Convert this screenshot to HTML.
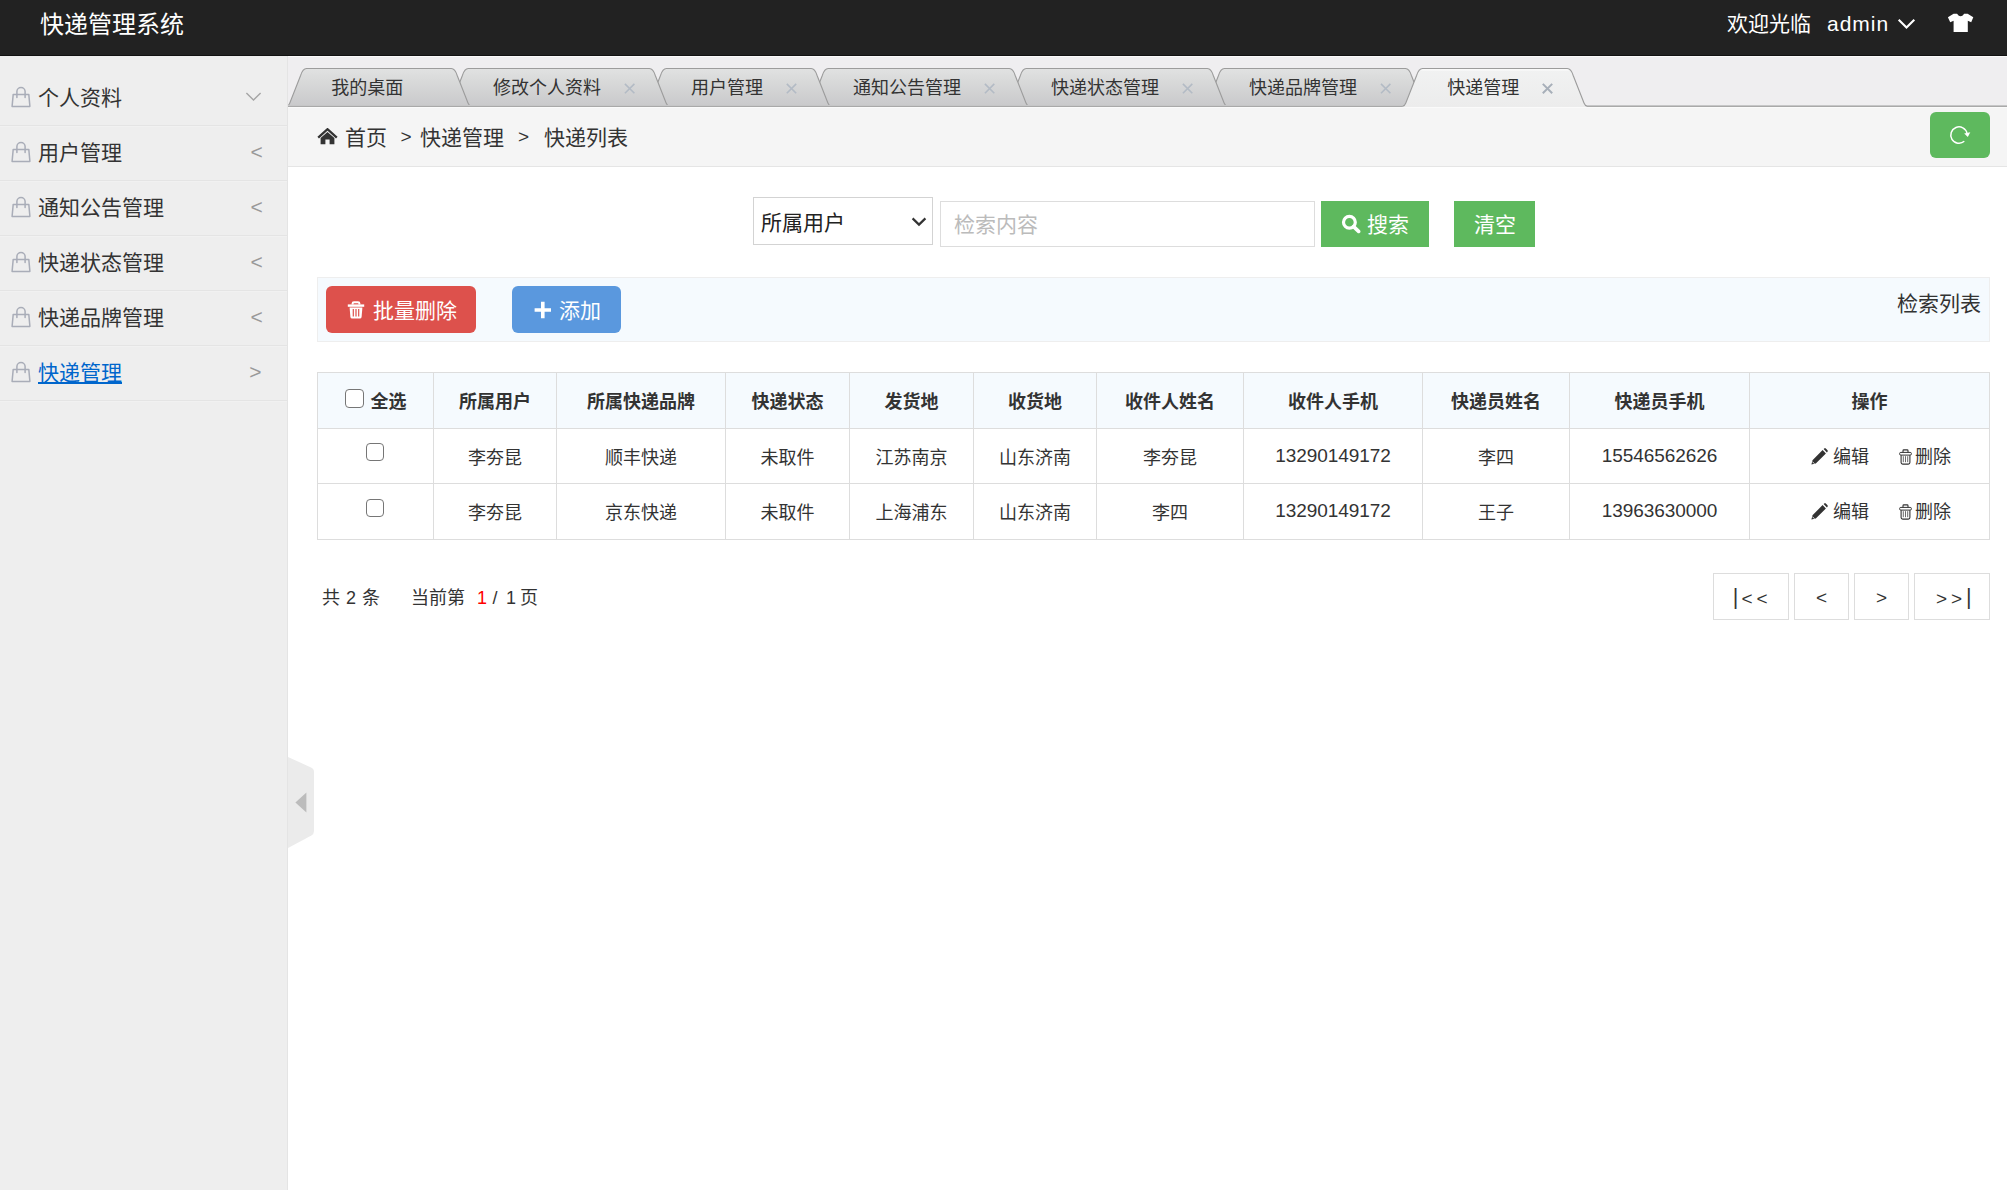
<!DOCTYPE html>
<html lang="zh-CN">
<head>
<meta charset="utf-8">
<title>快递管理系统</title>
<style>
*{box-sizing:border-box;margin:0;padding:0}
html,body{width:2007px;height:1190px;overflow:hidden;background:#fff}
body{font-family:"Liberation Sans","Noto Sans CJK SC",sans-serif;color:#333;font-size:21px;position:relative}
a{color:inherit;text-decoration:none}
ul{list-style:none}
svg{display:block}

/* ---------- header ---------- */
#hd{position:absolute;left:0;top:0;width:2007px;height:56px;background:#222;color:#fff;border-bottom:1px solid #121212}
#hd .logo{position:absolute;left:40px;top:1.5px;height:56px;line-height:46px;font-size:24px;color:#fff}
#hd .welcome{position:absolute;left:1727px;top:1px;line-height:46px;font-size:21px}
#hd .user{position:absolute;left:1827px;top:1px;line-height:46px;font-size:21px;letter-spacing:1px}
#hd svg{position:absolute}

/* ---------- sidebar ---------- */
#side{position:absolute;left:0;top:56px;width:288px;height:1134px;background:#eee;border-right:1px solid #e4e4e4}
#side ul{position:absolute;left:0;top:15px;width:287px}
#side li{position:relative;height:55px;border-bottom:1px solid #e4e4e4;box-shadow:0 1px 0 #f1f1f1;line-height:54px;font-size:21px;color:#333;padding-left:38px}
#side li svg.ic{position:absolute;left:10px;top:15.3px}
#side li svg.chev{position:absolute;left:245px;top:21px}
#side li .arr{position:absolute;left:250.5px;top:-1px;font-size:21px;color:#999}
#side li.cur a{color:#0066cc;text-decoration:underline}
#side li.cur .arr{left:249.3px}

/* ---------- tabs ---------- */
#tabbar{position:absolute;left:288px;top:56px;width:1719px;height:51px;background:#efeef0;box-shadow:inset 0 1px 0 #fbfbfb}
#tabbar svg{position:absolute;left:0;top:0}
#tabbar span{position:absolute;top:13px;height:38px;line-height:38px;font-size:18px;color:#333;white-space:nowrap}

/* ---------- breadcrumb ---------- */
#crumb{position:absolute;left:288px;top:107px;width:1719px;height:60px;background:#f5f5f5;border-top:1px solid #fafafa;border-bottom:1px solid #e5e5e5;font-size:21px;line-height:58px;color:#333}
#crumb span{position:absolute;top:0.5px;white-space:nowrap}
#crumb span.gt{font-size:19px;top:0}
#crumb svg{position:absolute;left:29px;top:20px}
#refresh{position:absolute;left:1930px;top:112px;width:60px;height:46px;background:#5eb95e;border-radius:6px}
#refresh svg{position:absolute;left:17px;top:12px}

/* ---------- search ---------- */
.sel{position:absolute;left:753px;top:197px;width:180px;height:48px;border:1px solid #d3d3d3;background:#fff;font-size:21px;line-height:48px;color:#222}
.sel span{position:absolute;left:7px;top:1px}
.sel svg{position:absolute;left:157.4px;top:19.4px}
.inp{position:absolute;left:940px;top:201px;width:375px;height:46px;border:1px solid #ddd;background:#fff;font-size:21px;line-height:45px;color:#bbb;padding-left:13px}
.btn{position:absolute;color:#fff;font-size:21px;white-space:nowrap}
.btn span{position:absolute;top:0}
.btn svg{position:absolute}
.b-search{left:1321px;top:201px;width:108px;height:46px;background:#5eb95e;line-height:48px}
.b-clear{left:1454px;top:201px;width:81px;height:46px;background:#5eb95e;line-height:48px}

/* ---------- toolbar ---------- */
#tool{position:absolute;left:317px;top:277px;width:1673px;height:65px;background:#f5fafe;border:1px solid #eee}
.b-del{left:326px;top:286px;width:150px;height:47px;background:#dd514c;border-radius:6px;line-height:49px}
.b-add{left:512px;top:286px;width:109px;height:47px;background:#5a98de;border-radius:6px;line-height:49px}
#tool .r{position:absolute;right:8px;top:0;line-height:52px;font-size:21px;color:#333}

/* ---------- table ---------- */
#tb{position:absolute;left:317px;top:372px;width:1672px;border-collapse:collapse;table-layout:fixed;font-size:18px;color:#333}
#tb th,#tb td{border:1px solid #ddd;text-align:center;vertical-align:middle;padding:0;white-space:nowrap;position:relative}
#tb th{height:56px;background:#f5fafe;font-weight:bold}
#tb td{height:55px;padding-bottom:1px}
#tb tr.r2 td{height:56px}
#tb th{padding-bottom:2px}
#tb td.num{font-size:19px;letter-spacing:-0.05px}
.cb{position:absolute;width:19px;height:19px;border:1.5px solid #767676;border-radius:4px;background:#fff}
th .cb{left:27px;top:16px}
td .cb{left:48px;top:14px;width:18px;height:18px}
th .qx{position:absolute;left:52.5px;top:2px;line-height:55px}
tr.r2 td .cb{top:14.7px}
.ops{position:absolute;left:0;top:0;width:240px;height:54px;line-height:54px}
.ops svg{position:absolute}
.ops a{position:absolute;top:1px}
.ops .pen{left:61px;top:19px}
.ops .ed{left:83px}
.ops .tr{left:149.3px;top:19.6px}
.ops .dl{left:165px}

/* ---------- pager ---------- */
#pg{position:absolute;left:322px;top:574.5px;font-size:18px;line-height:47px;color:#333}
#pg span{position:absolute;top:0;white-space:nowrap}
.pb{position:absolute;top:573px;height:47px;border:1px solid #ddd;background:#fff;text-align:center;line-height:48px;font-size:19px;color:#333;letter-spacing:3.9px;padding-left:3.9px}

/* ---------- toggle ---------- */
/* tall bar glyph */
.pb b{font-weight:normal;font-size:21.5px;letter-spacing:3.2px;position:relative;top:-1.2px}

#tog{position:absolute;left:288px;top:757px}
</style>
</head>
<body>

<div id="hd">
  <a class="logo">快递管理系统</a>
  <span class="welcome">欢迎光临</span>
  <span class="user">admin</span>
  <svg style="left:1896px;top:17px" width="21" height="14" viewBox="0 0 21 14"><path d="M2.7,2.7 L10.5,10.5 L18.3,2.7" fill="none" stroke="#fff" stroke-width="2.1"/></svg>
  <svg style="left:1946px;top:12px" width="30" height="22" viewBox="1946 12 30 22"><path d="M1953.6,13.8 L1957,13.8 Q1960.6,18.8 1964.2,13.8 L1967.6,13.8 L1973.3,17.2 L1971.2,22.2 L1967.8,20.7 L1967.8,32.1 L1953.6,32.1 L1953.6,20.7 L1950.2,22.2 L1947.9,17.2 Z" fill="#fff"/></svg>
</div>

<div id="side">
  <ul>
    <li><svg class="ic" width="22" height="22" viewBox="0 0 22 22"><path d="M3.2,8.4 H18.8 L19.9,20.4 H2.1 Z" fill="none" stroke="#a9adb8" stroke-width="1.5" stroke-linejoin="round"/><path d="M6.9,11.6 V5.6 A4.1,4.1 0 0 1 15.1,5.6 V11.6" fill="none" stroke="#a9adb8" stroke-width="1.5" stroke-linecap="round"/></svg><a>个人资料</a><svg class="chev" width="18" height="11" viewBox="0 0 18 11"><path d="M1.4,0.9 L8.5,7.9 L15.6,0.9" fill="none" stroke="#a5a5a5" stroke-width="1.4"/></svg></li>
    <li><svg class="ic" width="22" height="22" viewBox="0 0 22 22"><path d="M3.2,8.4 H18.8 L19.9,20.4 H2.1 Z" fill="none" stroke="#a9adb8" stroke-width="1.5" stroke-linejoin="round"/><path d="M6.9,11.6 V5.6 A4.1,4.1 0 0 1 15.1,5.6 V11.6" fill="none" stroke="#a9adb8" stroke-width="1.5" stroke-linecap="round"/></svg><a>用户管理</a><span class="arr">&lt;</span></li>
    <li><svg class="ic" width="22" height="22" viewBox="0 0 22 22"><path d="M3.2,8.4 H18.8 L19.9,20.4 H2.1 Z" fill="none" stroke="#a9adb8" stroke-width="1.5" stroke-linejoin="round"/><path d="M6.9,11.6 V5.6 A4.1,4.1 0 0 1 15.1,5.6 V11.6" fill="none" stroke="#a9adb8" stroke-width="1.5" stroke-linecap="round"/></svg><a>通知公告管理</a><span class="arr">&lt;</span></li>
    <li><svg class="ic" width="22" height="22" viewBox="0 0 22 22"><path d="M3.2,8.4 H18.8 L19.9,20.4 H2.1 Z" fill="none" stroke="#a9adb8" stroke-width="1.5" stroke-linejoin="round"/><path d="M6.9,11.6 V5.6 A4.1,4.1 0 0 1 15.1,5.6 V11.6" fill="none" stroke="#a9adb8" stroke-width="1.5" stroke-linecap="round"/></svg><a>快递状态管理</a><span class="arr">&lt;</span></li>
    <li><svg class="ic" width="22" height="22" viewBox="0 0 22 22"><path d="M3.2,8.4 H18.8 L19.9,20.4 H2.1 Z" fill="none" stroke="#a9adb8" stroke-width="1.5" stroke-linejoin="round"/><path d="M6.9,11.6 V5.6 A4.1,4.1 0 0 1 15.1,5.6 V11.6" fill="none" stroke="#a9adb8" stroke-width="1.5" stroke-linecap="round"/></svg><a>快递品牌管理</a><span class="arr">&lt;</span></li>
    <li class="cur"><svg class="ic" width="22" height="22" viewBox="0 0 22 22"><path d="M3.2,8.4 H18.8 L19.9,20.4 H2.1 Z" fill="none" stroke="#a9adb8" stroke-width="1.5" stroke-linejoin="round"/><path d="M6.9,11.6 V5.6 A4.1,4.1 0 0 1 15.1,5.6 V11.6" fill="none" stroke="#a9adb8" stroke-width="1.5" stroke-linecap="round"/></svg><a>快递管理</a><span class="arr">&gt;</span></li>
  </ul>
</div>

<div id="tabbar">
<svg id="tabsvg" width="1719" height="52" viewBox="288 56 1719 52">
<defs><linearGradient id="tg" x1="0" y1="0" x2="0" y2="1"><stop offset="0" stop-color="#e1e2e2"/><stop offset="0.35" stop-color="#d8d9d9"/><stop offset="1" stop-color="#c9c9cb"/></linearGradient><linearGradient id="ta" x1="0" y1="0" x2="0" y2="1"><stop offset="0" stop-color="#f1f2f2"/><stop offset="1" stop-color="#ececec"/></linearGradient></defs>
<path d="M1204.7,106.2 C1206.3,105.8 1207.0,104.7 1207.7,103.0 L1218.5,75.5 C1219.7,71.7 1221.4,68.5 1224.4,68.5 H1405.5 C1408.5,68.5 1410.2,71.7 1411.4,75.5 L1422.2,103.0 C1422.9,104.7 1423.6,105.8 1425.2,106.2 Z" fill="url(#tg)"/>
<path d="M1204.7,106.2 C1206.3,105.8 1207.0,104.7 1207.7,103.0 L1218.5,75.5 C1219.7,71.7 1221.4,68.5 1224.4,68.5 H1405.5 C1408.5,68.5 1410.2,71.7 1411.4,75.5 L1422.2,103.0 C1422.9,104.7 1423.6,105.8 1425.2,106.2 " fill="none" stroke="#9c9c9c" stroke-width="1.1"/>
<path d="M1006.6,106.2 C1008.2,105.8 1008.9,104.7 1009.6,103.0 L1020.4,75.5 C1021.6,71.7 1023.3,68.5 1026.3,68.5 H1207.4 C1210.4,68.5 1212.1,71.7 1213.3,75.5 L1224.1,103.0 C1224.8,104.7 1225.5,105.8 1227.1,106.2 Z" fill="url(#tg)"/>
<path d="M1006.6,106.2 C1008.2,105.8 1008.9,104.7 1009.6,103.0 L1020.4,75.5 C1021.6,71.7 1023.3,68.5 1026.3,68.5 H1207.4 C1210.4,68.5 1212.1,71.7 1213.3,75.5 L1224.1,103.0 C1224.8,104.7 1225.5,105.8 1227.1,106.2 " fill="none" stroke="#9c9c9c" stroke-width="1.1"/>
<path d="M808.5,106.2 C810.1,105.8 810.8,104.7 811.5,103.0 L822.3,75.5 C823.5,71.7 825.2,68.5 828.2,68.5 H1009.3 C1012.3,68.5 1014.0,71.7 1015.2,75.5 L1026.0,103.0 C1026.7,104.7 1027.4,105.8 1029.0,106.2 Z" fill="url(#tg)"/>
<path d="M808.5,106.2 C810.1,105.8 810.8,104.7 811.5,103.0 L822.3,75.5 C823.5,71.7 825.2,68.5 828.2,68.5 H1009.3 C1012.3,68.5 1014.0,71.7 1015.2,75.5 L1026.0,103.0 C1026.7,104.7 1027.4,105.8 1029.0,106.2 " fill="none" stroke="#9c9c9c" stroke-width="1.1"/>
<path d="M646.7,106.2 C648.3,105.8 649.0,104.7 649.7,103.0 L660.5,75.5 C661.7,71.7 663.4,68.5 666.4,68.5 H811.2 C814.2,68.5 815.9,71.7 817.1,75.5 L827.9,103.0 C828.6,104.7 829.3,105.8 830.9,106.2 Z" fill="url(#tg)"/>
<path d="M646.7,106.2 C648.3,105.8 649.0,104.7 649.7,103.0 L660.5,75.5 C661.7,71.7 663.4,68.5 666.4,68.5 H811.2 C814.2,68.5 815.9,71.7 817.1,75.5 L827.9,103.0 C828.6,104.7 829.3,105.8 830.9,106.2 " fill="none" stroke="#9c9c9c" stroke-width="1.1"/>
<path d="M448.6,106.2 C450.2,105.8 450.9,104.7 451.6,103.0 L462.4,75.5 C463.6,71.7 465.3,68.5 468.3,68.5 H649.4 C652.4,68.5 654.1,71.7 655.3,75.5 L666.1,103.0 C666.8,104.7 667.5,105.8 669.1,106.2 Z" fill="url(#tg)"/>
<path d="M448.6,106.2 C450.2,105.8 450.9,104.7 451.6,103.0 L462.4,75.5 C463.6,71.7 465.3,68.5 468.3,68.5 H649.4 C652.4,68.5 654.1,71.7 655.3,75.5 L666.1,103.0 C666.8,104.7 667.5,105.8 669.1,106.2 " fill="none" stroke="#9c9c9c" stroke-width="1.1"/>
<path d="M286.8,106.2 C288.4,105.8 289.1,104.7 289.8,103.0 L300.6,75.5 C301.8,71.7 303.5,68.5 306.5,68.5 H451.3 C454.3,68.5 456.0,71.7 457.2,75.5 L468.0,103.0 C468.7,104.7 469.4,105.8 471.0,106.2 Z" fill="url(#tg)"/>
<path d="M286.8,106.2 C288.4,105.8 289.1,104.7 289.8,103.0 L300.6,75.5 C301.8,71.7 303.5,68.5 306.5,68.5 H451.3 C454.3,68.5 456.0,71.7 457.2,75.5 L468.0,103.0 C468.7,104.7 469.4,105.8 471.0,106.2 " fill="none" stroke="#9c9c9c" stroke-width="1.1"/>
<rect x="288" y="105" width="1719" height="1" fill="#c6c6c7"/>
<rect x="288" y="106" width="1719" height="1" fill="#a9a9a9"/>
<path d="M1402.8,106.2 C1404.4,105.8 1405.1,104.7 1405.8,103.0 L1416.6,75.5 C1417.8,71.7 1419.5,68.5 1422.5,68.5 H1567.3 C1570.3,68.5 1572.0,71.7 1573.2,75.5 L1584.0,103.0 C1584.7,104.7 1585.4,105.8 1587.0,106.2 V107 H1402.8Z" fill="url(#ta)"/>
<path d="M1420.5,69.9 H1569.3" stroke="#fbfbfb" stroke-width="1.2"/>
<path d="M1402.8,106.2 C1404.4,105.8 1405.1,104.7 1405.8,103.0 L1416.6,75.5 C1417.8,71.7 1419.5,68.5 1422.5,68.5 H1567.3 C1570.3,68.5 1572.0,71.7 1573.2,75.5 L1584.0,103.0 C1584.7,104.7 1585.4,105.8 1587.0,106.2 " fill="none" stroke="#9c9c9c" stroke-width="1.1"/>
<path d="M624.9,83.9 L634.4,93.3 M634.4,83.9 L624.9,93.3" stroke="#b3bbc5" stroke-width="1.6" fill="none"/>
<path d="M786.8,83.9 L796.2,93.3 M796.2,83.9 L786.8,93.3" stroke="#b3bbc5" stroke-width="1.6" fill="none"/>
<path d="M984.9,83.9 L994.3,93.3 M994.3,83.9 L984.9,93.3" stroke="#b3bbc5" stroke-width="1.6" fill="none"/>
<path d="M1182.9,83.9 L1192.3,93.3 M1192.3,83.9 L1182.9,93.3" stroke="#b3bbc5" stroke-width="1.6" fill="none"/>
<path d="M1381.0,83.9 L1390.4,93.3 M1390.4,83.9 L1381.0,93.3" stroke="#b3bbc5" stroke-width="1.6" fill="none"/>
<path d="M1542.8,83.9 L1552.2,93.3 M1552.2,83.9 L1542.8,93.3" stroke="#a7afb9" stroke-width="2.0" fill="none"/>
</svg>
<span style="left:43.2px">我的桌面</span>
<span style="left:205.0px">修改个人资料</span>
<span style="left:403.1px">用户管理</span>
<span style="left:564.9px">通知公告管理</span>
<span style="left:763.0px">快递状态管理</span>
<span style="left:961.1px">快递品牌管理</span>
<span style="left:1159.2px">快递管理</span>
</div>

<div id="crumb">
  <svg width="21" height="17" viewBox="0 0 21 17"><path d="M1.2,9.6 L10.5,1.2 L19.8,9.6" fill="none" stroke="#333" stroke-width="2.3" stroke-linejoin="miter"/><path d="M3.6,10 L10.5,3.9 L17.4,10 V16.2 H12.6 V11.4 H8.4 V16.2 H3.6 Z" fill="#333"/></svg>
  <span style="left:57px">首页</span>
  <span class="gt" style="left:112.5px">&gt;</span>
  <span style="left:132px">快递管理</span>
  <span class="gt" style="left:230px">&gt;</span>
  <span style="left:256px">快递列表</span>
</div>
<a id="refresh"><svg width="24" height="22" viewBox="0 0 24 22"><path d="M20,9.3 A8.2,8.2 0 1 0 17.3,17.3" fill="none" stroke="#fff" stroke-width="1.5"/><path d="M17.2,9.5 L23.3,8.3 L20.8,12.9 Z" fill="#fff"/></svg></a>

<div class="sel"><span>所属用户</span><svg width="16" height="10" viewBox="0 0 16 10"><path d="M1.6,1.4 L8,7.6 L14.4,1.4" fill="none" stroke="#333" stroke-width="2.2"/></svg></div>
<div class="inp">检索内容</div>
<a class="btn b-search"><svg style="left:20px;top:13.4px" width="20" height="20" viewBox="0 0 20 20"><circle cx="8.4" cy="8.2" r="5.9" fill="none" stroke="#fff" stroke-width="3.2"/><path d="M12.6,12.6 L17.6,17.4" stroke="#fff" stroke-width="3.6" stroke-linecap="round"/></svg><span style="left:46px">搜索</span></a>
<a class="btn b-clear"><span style="left:20px">清空</span></a>

<div id="tool"><span class="r">检索列表</span></div>
<a class="btn b-del"><svg style="left:21px;top:15px" width="18" height="19" viewBox="0 0 18 19"><path d="M0.8,4.6 H17.2" stroke="#fff" stroke-width="2.4"/><path d="M5.6,3.6 V2.6 Q5.6,1.2 7,1.2 H11 Q12.4,1.2 12.4,2.6 V3.6" fill="none" stroke="#fff" stroke-width="2"/><path d="M2.6,6.6 L3.4,16 Q3.6,17.6 5.2,17.6 H12.8 Q14.4,17.6 14.6,16 L15.4,6.6 Z" fill="#fff"/><path d="M6.3,8 V15.4 M9,8 V15.4 M11.7,8 V15.4" stroke="#dd514c" stroke-width="1.2"/></svg><span style="left:47px">批量删除</span></a>
<a class="btn b-add"><svg style="left:22px;top:15px" width="18" height="18" viewBox="0 0 18 18"><path d="M8.8,0.8 V17.2 M0.6,9 H17" stroke="#fff" stroke-width="3.6"/></svg><span style="left:47px">添加</span></a>

<table id="tb">
  <colgroup>
    <col style="width:116px"><col style="width:123px"><col style="width:169px"><col style="width:124px"><col style="width:124px"><col style="width:123px"><col style="width:147px"><col style="width:179px"><col style="width:147px"><col style="width:180px"><col style="width:240px">
  </colgroup>
  <thead>
    <tr><th><span class="cb"></span><span class="qx">全选</span></th><th>所属用户</th><th>所属快递品牌</th><th>快递状态</th><th>发货地</th><th>收货地</th><th>收件人姓名</th><th>收件人手机</th><th>快递员姓名</th><th>快递员手机</th><th>操作</th></tr>
  </thead>
  <tbody>
    <tr><td><span class="cb"></span></td><td>李夯昆</td><td>顺丰快递</td><td>未取件</td><td>江苏南京</td><td>山东济南</td><td>李夯昆</td><td class="num">13290149172</td><td>李四</td><td class="num">15546562626</td><td><span class="ops"><svg class="pen" width="17" height="17" viewBox="0 0 17 17"><path d="M0.4,16.6 L1.5,12.2 L11.6,2.1 L14.9,5.4 L4.8,15.5 Z M12.6,1.1 L13.3,0.4 Q14,-0.2 14.8,0.5 L16.5,2.2 Q17.1,3 16.5,3.7 L15.9,4.4 Z" fill="#333"/><path d="M1.3,13.6 L3.4,15.7" stroke="#fff" stroke-width="0.9"/></svg><a class="ed">编辑</a><svg class="tr" width="13" height="16" viewBox="0 0 13 16"><path d="M4,3.4 V1.7 Q4,0.9 4.8,0.9 H8.2 Q9,0.9 9,1.7 V3.4" fill="none" stroke="#333" stroke-width="1.1"/><rect x="0.6" y="3.4" width="11.8" height="2.7" rx="1.2" fill="none" stroke="#333" stroke-width="1"/><path d="M2.1,6.2 V13.5 Q2.1,15.1 3.7,15.1 H9.3 Q10.9,15.1 10.9,13.5 V6.2" fill="none" stroke="#333" stroke-width="1.1"/><path d="M4.3,7.2 V13.2 M6.5,7.2 V13.2 M8.7,7.2 V13.2" stroke="#5a5a5a" stroke-width="0.9"/></svg><a class="dl">删除</a></span></td></tr>
    <tr class="r2"><td><span class="cb"></span></td><td>李夯昆</td><td>京东快递</td><td>未取件</td><td>上海浦东</td><td>山东济南</td><td>李四</td><td class="num">13290149172</td><td>王子</td><td class="num">13963630000</td><td><span class="ops"><svg class="pen" width="17" height="17" viewBox="0 0 17 17"><path d="M0.4,16.6 L1.5,12.2 L11.6,2.1 L14.9,5.4 L4.8,15.5 Z M12.6,1.1 L13.3,0.4 Q14,-0.2 14.8,0.5 L16.5,2.2 Q17.1,3 16.5,3.7 L15.9,4.4 Z" fill="#333"/><path d="M1.3,13.6 L3.4,15.7" stroke="#fff" stroke-width="0.9"/></svg><a class="ed">编辑</a><svg class="tr" width="13" height="16" viewBox="0 0 13 16"><path d="M4,3.4 V1.7 Q4,0.9 4.8,0.9 H8.2 Q9,0.9 9,1.7 V3.4" fill="none" stroke="#333" stroke-width="1.1"/><rect x="0.6" y="3.4" width="11.8" height="2.7" rx="1.2" fill="none" stroke="#333" stroke-width="1"/><path d="M2.1,6.2 V13.5 Q2.1,15.1 3.7,15.1 H9.3 Q10.9,15.1 10.9,13.5 V6.2" fill="none" stroke="#333" stroke-width="1.1"/><path d="M4.3,7.2 V13.2 M6.5,7.2 V13.2 M8.7,7.2 V13.2" stroke="#5a5a5a" stroke-width="0.9"/></svg><a class="dl">删除</a></span></td></tr>
  </tbody>
</table>

<div id="pg">
  <span style="left:0">共</span><span style="left:24px">2</span><span style="left:40px">条</span>
  <span style="left:89px">当前第</span>
  <span style="left:155px;color:#f00">1</span>
  <span style="left:170.5px">/</span><span style="left:184px">1</span><span style="left:198px">页</span>
</div>
<a class="pb" style="left:1713px;width:76px;padding-left:2.2px"><b>|</b>&lt;&lt;</a>
<a class="pb" style="left:1794px;width:55px">&lt;</a>
<a class="pb" style="left:1854px;width:55px">&gt;</a>
<a class="pb" style="left:1914px;width:76px;padding-left:6.9px">&gt;&gt;<b>|</b></a>

<svg id="tog" width="27" height="92" viewBox="0 0 27 92"><path d="M0,0 L23,10.4 Q26,11.8 26,15 V74 Q26,77 23.4,78.4 L0,91 Z" fill="#ebebeb"/><path d="M7.4,45.4 L18.4,35.4 V55.4 Z" fill="#bcbcbc"/></svg>

</body>
</html>
